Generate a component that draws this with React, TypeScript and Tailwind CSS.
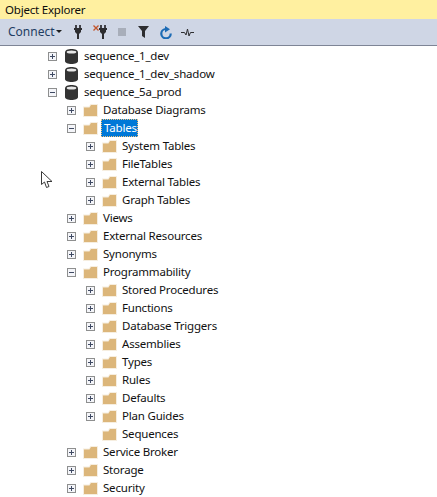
const rows: [number, "plus" | "minus" | "none", "db" | "folder", string, boolean?][] = [
  [0, "plus", "db", "sequence_1_dev"],
  [0, "plus", "db", "sequence_1_dev_shadow"],
  [0, "minus", "db", "sequence_5a_prod"],
  [1, "plus", "folder", "Database Diagrams"],
  [1, "minus", "folder", "Tables", true],
  [2, "plus", "folder", "System Tables"],
  [2, "plus", "folder", "FileTables"],
  [2, "plus", "folder", "External Tables"],
  [2, "plus", "folder", "Graph Tables"],
  [1, "plus", "folder", "Views"],
  [1, "plus", "folder", "External Resources"],
  [1, "plus", "folder", "Synonyms"],
  [1, "minus", "folder", "Programmability"],
  [2, "plus", "folder", "Stored Procedures"],
  [2, "plus", "folder", "Functions"],
  [2, "plus", "folder", "Database Triggers"],
  [2, "plus", "folder", "Assemblies"],
  [2, "plus", "folder", "Types"],
  [2, "plus", "folder", "Rules"],
  [2, "plus", "folder", "Defaults"],
  [2, "plus", "folder", "Plan Guides"],
  [2, "none", "folder", "Sequences"],
  [1, "plus", "folder", "Service Broker"],
  [1, "plus", "folder", "Storage"],
  [1, "plus", "folder", "Security"],
];

function Expander({ kind }: { kind: "plus" | "minus" | "none" }) {
  if (kind === "none") return <span className="w-[9px] h-[9px] shrink-0" />;
  return (
    <svg width="9" height="9" viewBox="0 0 9 9" className="shrink-0">
      <rect x="0.5" y="0.5" width="8" height="8" fill="#f4f5f9" stroke="#8e8f8f" />
      <path d="M2 4.5H7" stroke="#3f4a63" />
      {kind === "plus" && <path d="M4.5 2V7" stroke="#3f4a63" />}
    </svg>
  );
}

function Db() {
  return (
    <svg width="13" height="15" viewBox="0 0 13 15" className="shrink-0">
      <path d="M0 3.5C0 1 3 0 6.5 0S13 1 13 3.5V12C13 14 10 15 6.5 15S0 14 0 12Z" fill="#333333" />
      <ellipse cx="6.5" cy="3" rx="4.8" ry="1.5" fill="#e8e8e8" />
    </svg>
  );
}

function Folder() {
  return (
    <svg width="15" height="13" viewBox="0 0 15 13" className="shrink-0">
      <path d="M0 2.5H6L7.5 0H15V13H0Z" fill="#f6eee0" />
      <path d="M1 3.5H6.5L8 1H14V12H1Z" fill="#dcb67a" />
    </svg>
  );
}

function Plug() {
  return (
    <svg width="8" height="14" viewBox="0 0 8 14" className="shrink-0">
      <path d="M1 0H3V3H1ZM5 0H7V3H5Z" fill="#424248" />
      <path d="M0 3H8V5H7V7L5 9V14H3V9L1 7V5H0Z" fill="#2d2d30" />
    </svg>
  );
}

export default function App() {
  return (
    <div className="w-[437px] h-[497px] overflow-hidden bg-white text-[11.5px] tracking-[-0.2px] text-[#111111] font-['Noto_Sans','Open_Sans',sans-serif] relative">
      <div className="h-[19px] bg-[#fff0a0] flex items-center pl-[5px] leading-none text-[#0c0c0c]">Object Explorer</div>
      <div className="h-[26px] bg-[#cfd6e5] border-b-[1px] border-[#7e8596] flex items-center box-content -mb-px">
        <span className="ml-[8px] w-[48px] text-[#1f3d63] text-[12px] tracking-normal">Connect</span>
        <svg width="6" height="4" viewBox="0 0 6 4" className="shrink-0"><path d="M0 0H6L3 3Z" fill="#1e1e1e" /></svg>
        <span className="ml-[12px] flex"><Plug /></span>
        <span className="ml-[11px] flex items-start">
          <svg width="6" height="6" viewBox="0 0 6 6" className="shrink-0"><path d="M0.5 0.5L5.5 5.5M5.5 0.5L0.5 5.5" stroke="#c2552c" strokeWidth="1.3" /></svg>
          <Plug />
        </span>
        <span className="ml-[11px] w-[8px] h-[8px] bg-[#a8aeba]" />
        <svg width="11" height="12" viewBox="0 0 11 12" className="ml-[12px] shrink-0"><path d="M0 0H11L7 5V12L4 10V5Z" fill="#2d2d30" /></svg>
        <svg width="12" height="13" viewBox="0 0 12 13" className="ml-[11px] shrink-0">
          <path d="M5.5 3A4.7 4.7 0 1 0 10.7 7.5" fill="none" stroke="#1c6bb5" strokeWidth="2.2" />
          <path d="M5 0V6.5L10 3.2Z" fill="#1c6bb5" />
        </svg>
        <svg width="13" height="9" viewBox="0 0 13 9" className="ml-[9px] shrink-0"><path d="M0 4.5H3.5L5 7L6.5 1L8 8L9.5 4.5H13" fill="none" stroke="#2d2d30" strokeWidth="1" /></svg>
      </div>
      <div className="pt-[2px] flex flex-col">
        {rows.map(([level, kind, icon, label, selected]) => (
          <div key={label} className={`h-[18px] flex items-center ${level === 0 ? "pl-[48px]" : level === 1 ? "pl-[67px]" : "pl-[86px]"}`}>
            <Expander kind={kind} />
            <span className="ml-[7px] w-[15px] flex justify-center shrink-0">{icon === "db" ? <Db /> : <Folder />}</span>
            {selected ? (
              <span className="ml-[3px] h-[18px] w-[37px] bg-[#0078d7] text-white pl-[2px] leading-[16px] border border-dotted border-[#f5c27a]">{label}</span>
            ) : (
              <span className="ml-[5px] leading-[18px] whitespace-nowrap">{label}</span>
            )}
          </div>
        ))}
      </div>
      <svg width="13" height="18" viewBox="0 0 13 18" className="absolute left-[41px] top-[171px]">
        <path d="M0.5 0.5V13.5L3.5 11L5.5 16.5L8 15.5L6 10.5H11Z" fill="#ffffff" stroke="#3a3a3a" strokeWidth="1" />
      </svg>
    </div>
  );
}
